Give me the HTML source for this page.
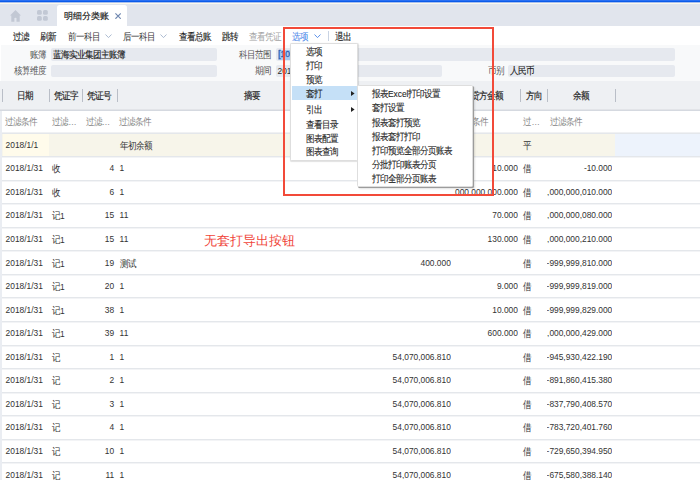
<!DOCTYPE html><html><head><meta charset="utf-8"><style>
*{margin:0;padding:0;box-sizing:border-box}
html,body{width:700px;height:480px;overflow:hidden;background:#fff}
body{position:relative;font-family:"Liberation Sans",sans-serif;font-size:8.4px;color:#333;line-height:1}
.a{position:absolute;white-space:nowrap}
.topbar{left:0;top:0;width:700px;height:3px;background:linear-gradient(#2a6ff2 0,#2a6ff2 1px,#0b5ce9 1px,#0b5ce9 2px,#a9bfef 2px)}
.topline{left:0;top:3px;width:700px;height:1px;background:#fbf9ec}
.tabbar{left:0;top:4px;width:700px;height:22px;background:#e1e5ed}
.tab{left:56.8px;top:5.4px;width:70.4px;height:21px;background:#fff;border-radius:2.5px 2.5px 0 0}
.tabt{left:64px;top:11.8px;font-size:8.9px;color:#222;-webkit-text-stroke:0.2px #222}
.toolbar{left:0;top:26px;width:700px;height:18.8px;background:#fff}
.tb{top:32.6px;font-size:8.4px;color:#1f1f1f;-webkit-text-stroke:0.12px currentColor}
.form{left:1px;top:44.8px;width:699px;height:36px;background:#f8f9fa}
.lbl{font-size:8.4px;color:#555}
.val{color:#1a1a1a;-webkit-text-stroke:0.12px currentColor}
.inp{background:#e6e9ef;height:12.4px;border-radius:2px}
.hdr{left:0;top:80.7px;width:700px;height:30.3px;background:#eef0f3;border-bottom:1px solid #d5d9e0}
.hs{width:1px;height:12.8px;top:89.4px;background:#b9bec7}
.ht{top:91.5px;font-size:8.4px;color:#222;-webkit-text-stroke:0.15px currentColor}
.filter{left:0;top:111px;width:700px;height:22.6px;background:#fff;border-bottom:1px solid #e4e7eb}
.ft{top:117.8px;color:#888}
.row{left:0;width:700px;border-bottom:1px solid #e4e7eb;box-shadow:0 1px 0 #f3f4f6}
.rt{color:#333}
.lstrip{left:0;top:111px;width:2px;height:370px;background:#eaedf2}
.menu{background:#fff;border:1px solid #dedede;border-radius:1.5px;box-shadow:0.5px 0.5px 1px rgba(0,0,0,.12)}
.sub{box-shadow:1px 1px 0 #9c9c9c,2px 2px 2px rgba(0,0,0,.12)}
.mi{font-size:8.4px;color:#1f1f1f;-webkit-text-stroke:0.1px currentColor}
.red{border:2px solid #f24a39}
.cj{transform:translateY(-0.4px) scaleY(1.17)}
.nm{transform:translateY(-1.3px) scaleY(1.12)}
.ann{left:203.8px;top:234.6px;font-size:12.5px;color:#f0453a}
</style></head><body>
<div class="a topbar" style=""></div>
<div class="a topline" style=""></div>
<div class="a tabbar" style=""></div>
<svg class="a" style="left:10px;top:9.8px" width="11" height="11.8" viewBox="0 0 11 11.8"><path d="M5.5 0 L0 5.4 L1.3 5.4 L1.3 11.8 L4.4 11.8 L4.4 8 Q5.45 7.3 6.5 8 L6.5 11.8 L9.7 11.8 L9.7 5.4 L11 5.4 Z" fill="#c2c8d4"/></svg>
<svg class="a" style="left:37px;top:10px" width="11" height="11" viewBox="0 0 11 11"><rect x="0" y="0" width="4.8" height="4.8" rx="1.6" fill="#c2c8d4"/><rect x="6" y="0" width="4.8" height="4.8" rx="1.6" fill="#c2c8d4"/><rect x="0" y="6" width="4.8" height="4.8" rx="1.6" fill="#c2c8d4"/><rect x="6" y="6" width="4.8" height="4.8" rx="1.6" fill="#c2c8d4"/></svg>
<div class="a tab" style=""></div>
<div class="a tabt" style="">明细分类账</div>
<svg class="a" style="left:114.6px;top:12.9px" width="6.2" height="6.2" viewBox="0 0 6 6"><path d="M0.4 0.4 L5.6 5.6 M5.6 0.4 L0.4 5.6" stroke="#7088b0" stroke-width="1.1"/></svg>
<div class="a toolbar" style=""></div>
<div class="a tb cj" style="left:13.2px">过滤</div>
<div class="a tb cj" style="left:40.3px">刷新</div>
<div class="a tb cj" style="left:68px;-webkit-text-stroke:0;color:#333">前一科目</div>
<svg class="a" style="left:104.5px;top:34px" width="7" height="4.5" viewBox="0 0 7 4.5"><path d="M0.5 0.5 L3.5 3.6 L6.5 0.5" fill="none" stroke="#a3b3cc" stroke-width="0.9"/></svg>
<div class="a tb cj" style="left:123px;-webkit-text-stroke:0;color:#333">后一科目</div>
<svg class="a" style="left:159.5px;top:34px" width="7" height="4.5" viewBox="0 0 7 4.5"><path d="M0.5 0.5 L3.5 3.6 L6.5 0.5" fill="none" stroke="#a3b3cc" stroke-width="0.9"/></svg>
<div class="a tb cj" style="left:179px">查看总账</div>
<div class="a tb cj" style="left:222px">跳转</div>
<div class="a tb cj" style="left:248.5px;color:#a3a3a3;-webkit-text-stroke:0">查看凭证</div>
<div class="a tb cj" style="left:292.3px;color:#3f7fe8;-webkit-text-stroke:0">选项</div>
<svg class="a" style="left:313.5px;top:34px" width="7" height="4.5" viewBox="0 0 7 4.5"><path d="M0.5 0.5 L3.5 3.6 L6.5 0.5" fill="none" stroke="#4a86e8" stroke-width="0.9"/></svg>
<div class="a a" style="left:327.5px;top:31px;width:1px;height:10px;background:#c9d3e3"></div>
<div class="a tb cj" style="left:335.3px">退出</div>
<div class="a form" style=""></div>
<div class="a lbl cj" style="left:29.7px;top:50.5px">账簿</div>
<div class="a inp" style="left:50.9px;top:48.4px;width:165.8px"></div>
<div class="a val cj" style="left:53px;top:50.5px">蓝海实业集团主账簿</div>
<div class="a lbl cj" style="left:14.3px;top:66.8px">核算维度</div>
<div class="a inp" style="left:50.9px;top:65px;width:165.8px"></div>
<div class="a lbl cj" style="left:238.9px;top:50.5px">科目范围</div>
<div class="a inp" style="left:276px;top:48.4px;width:398.8px"></div>
<div class="a " style="left:277.8px;top:49.5px;height:10.2px;width:13px;background:#a9c9f0"></div>
<div class="a  nm" style="left:278.2px;top:50.5px;color:#2d5cb0;-webkit-text-stroke:0.25px currentColor">[100</div>
<div class="a lbl cj" style="left:255.4px;top:66.8px">期间</div>
<div class="a inp" style="left:276px;top:65px;width:166px"></div>
<div class="a val nm" style="left:277.5px;top:67.8px;-webkit-text-stroke:0;color:#2a2a2a">2018</div>
<div class="a lbl cj" style="left:487.8px;top:66.8px">币别</div>
<div class="a inp" style="left:507.5px;top:65px;width:167.3px"></div>
<div class="a val cj" style="left:510px;top:66.8px">人民币</div>
<div class="a hdr" style=""></div>
<div class="a " style="left:0;top:109px;width:700px;height:1px;background:#e2e4e8"></div>
<div class="a hs" style="left:2.0px"></div>
<div class="a hs" style="left:48.9px"></div>
<div class="a hs" style="left:82.4px"></div>
<div class="a hs" style="left:116.6px"></div>
<div class="a hs" style="left:385.5px"></div>
<div class="a hs" style="left:452.5px"></div>
<div class="a hs" style="left:519.5px"></div>
<div class="a hs" style="left:546.9px"></div>
<div class="a hs" style="left:614.5px"></div>
<div class="a ht cj" style="left:0.8999999999999999px;width:48.5px;text-align:center;top:91.5px">日期</div>
<div class="a ht cj" style="left:48.8px;width:33.500000000000014px;text-align:center;top:91.5px">凭证字</div>
<div class="a ht cj" style="left:81.7px;width:34.19999999999999px;text-align:center;top:91.5px">凭证号</div>
<div class="a ht cj" style="left:117.1px;width:268.9px;text-align:center;top:91.5px">摘要</div>
<div class="a ht cj" style="left:386px;width:67px;text-align:center;top:91.5px">借方金额</div>
<div class="a ht cj" style="left:453px;width:67px;text-align:center;top:91.5px">贷方金额</div>
<div class="a ht cj" style="left:520px;width:27.399999999999977px;text-align:center;top:91.5px">方向</div>
<div class="a ht cj" style="left:547.4px;width:67.60000000000002px;text-align:center;top:91.5px">余额</div>
<div class="a filter" style=""></div>
<div class="a " style="left:0;top:132px;width:700px;height:1px;background:#f0f1f3"></div>
<div class="a ft cj" style="left:5px">过滤条件</div>
<div class="a ft cj" style="left:52.3px">过滤…</div>
<div class="a ft cj" style="left:85.7px">过滤…</div>
<div class="a ft cj" style="left:119.4px">过滤条件</div>
<div class="a ft cj" style="left:389px">过滤条件</div>
<div class="a ft cj" style="left:456px">过滤条件</div>
<div class="a ft cj" style="left:523.4px">过…</div>
<div class="a ft cj" style="left:549.8px">过滤条件</div>
<div class="a row" style="top:133.54px;height:23.56px;background:#f7f5ea"></div>
<div class="a " style="left:2.5px;top:133.54px;width:46.9px;height:22.56px;background:#fffbeb"></div>
<div class="a " style="left:615px;top:133.54px;width:85px;height:22.56px;background:#edf3fc"></div>
<div class="a rt nm" style="left:5.6px;top:141.73999999999998px">2018/1/1</div>
<div class="a rt cj" style="left:119.6px;top:141.73999999999998px">年初余额</div>
<div class="a rt cj" style="left:523px;top:141.73999999999998px">平</div>
<div class="a row" style="top:157.1px;height:23.56px"></div>
<div class="a rt nm" style="left:5.6px;top:165.29999999999998px">2018/1/31</div>
<div class="a rt cj" style="left:52px;top:165.29999999999998px">收</div>
<div class="a rt nm" style="left:82.9px;width:31.19999999999999px;text-align:right;top:165.29999999999998px">4</div>
<div class="a rt nm" style="left:119.6px;top:165.29999999999998px">1</div>
<div class="a rt nm" style="left:453.8px;width:64.1px;text-align:right;top:165.29999999999998px;overflow:hidden;display:flex;justify-content:flex-end">10.000</div>
<div class="a rt cj" style="left:523px;top:165.29999999999998px">借</div>
<div class="a rt nm" style="left:547.4px;width:64.90000000000002px;text-align:right;top:165.29999999999998px;overflow:hidden;display:flex;justify-content:flex-end">-10.000</div>
<div class="a row" style="top:180.66px;height:23.56px"></div>
<div class="a rt nm" style="left:5.6px;top:188.85999999999999px">2018/1/31</div>
<div class="a rt cj" style="left:52px;top:188.85999999999999px">收</div>
<div class="a rt nm" style="left:82.9px;width:31.19999999999999px;text-align:right;top:188.85999999999999px">6</div>
<div class="a rt nm" style="left:119.6px;top:188.85999999999999px">1</div>
<div class="a rt nm" style="left:453.8px;width:64.1px;text-align:right;top:188.85999999999999px;overflow:hidden;display:flex;justify-content:flex-end">-1,000,000,000.000</div>
<div class="a rt cj" style="left:523px;top:188.85999999999999px">借</div>
<div class="a rt nm" style="left:547.4px;width:64.90000000000002px;text-align:right;top:188.85999999999999px;overflow:hidden;display:flex;justify-content:flex-end">-1,000,000,010.000</div>
<div class="a row" style="top:204.21999999999997px;height:23.56px"></div>
<div class="a rt nm" style="left:5.6px;top:212.41999999999996px">2018/1/31</div>
<div class="a rt cj" style="left:52px;top:212.41999999999996px">记1</div>
<div class="a rt nm" style="left:82.9px;width:31.19999999999999px;text-align:right;top:212.41999999999996px">15</div>
<div class="a rt nm" style="left:119.6px;top:212.41999999999996px">11</div>
<div class="a rt nm" style="left:453.8px;width:64.1px;text-align:right;top:212.41999999999996px;overflow:hidden;display:flex;justify-content:flex-end">70.000</div>
<div class="a rt cj" style="left:523px;top:212.41999999999996px">借</div>
<div class="a rt nm" style="left:547.4px;width:64.90000000000002px;text-align:right;top:212.41999999999996px;overflow:hidden;display:flex;justify-content:flex-end">-1,000,000,080.000</div>
<div class="a row" style="top:227.77999999999997px;height:23.56px"></div>
<div class="a rt nm" style="left:5.6px;top:235.97999999999996px">2018/1/31</div>
<div class="a rt cj" style="left:52px;top:235.97999999999996px">记1</div>
<div class="a rt nm" style="left:82.9px;width:31.19999999999999px;text-align:right;top:235.97999999999996px">15</div>
<div class="a rt nm" style="left:119.6px;top:235.97999999999996px">11</div>
<div class="a rt nm" style="left:453.8px;width:64.1px;text-align:right;top:235.97999999999996px;overflow:hidden;display:flex;justify-content:flex-end">130.000</div>
<div class="a rt cj" style="left:523px;top:235.97999999999996px">借</div>
<div class="a rt nm" style="left:547.4px;width:64.90000000000002px;text-align:right;top:235.97999999999996px;overflow:hidden;display:flex;justify-content:flex-end">-1,000,000,210.000</div>
<div class="a row" style="top:251.33999999999997px;height:23.56px"></div>
<div class="a rt nm" style="left:5.6px;top:259.53999999999996px">2018/1/31</div>
<div class="a rt cj" style="left:52px;top:259.53999999999996px">记1</div>
<div class="a rt nm" style="left:82.9px;width:31.19999999999999px;text-align:right;top:259.53999999999996px">19</div>
<div class="a rt cj" style="left:119.6px;top:259.53999999999996px">测试</div>
<div class="a rt nm" style="left:386px;width:64.8px;text-align:right;top:259.53999999999996px;overflow:hidden;display:flex;justify-content:flex-end">400.000</div>
<div class="a rt cj" style="left:523px;top:259.53999999999996px">借</div>
<div class="a rt nm" style="left:547.4px;width:64.90000000000002px;text-align:right;top:259.53999999999996px;overflow:hidden;display:flex;justify-content:flex-end">-999,999,810.000</div>
<div class="a row" style="top:274.9px;height:23.56px"></div>
<div class="a rt nm" style="left:5.6px;top:283.09999999999997px">2018/1/31</div>
<div class="a rt cj" style="left:52px;top:283.09999999999997px">记1</div>
<div class="a rt nm" style="left:82.9px;width:31.19999999999999px;text-align:right;top:283.09999999999997px">20</div>
<div class="a rt nm" style="left:119.6px;top:283.09999999999997px">1</div>
<div class="a rt nm" style="left:453.8px;width:64.1px;text-align:right;top:283.09999999999997px;overflow:hidden;display:flex;justify-content:flex-end">9.000</div>
<div class="a rt cj" style="left:523px;top:283.09999999999997px">借</div>
<div class="a rt nm" style="left:547.4px;width:64.90000000000002px;text-align:right;top:283.09999999999997px;overflow:hidden;display:flex;justify-content:flex-end">-999,999,819.000</div>
<div class="a row" style="top:298.46px;height:23.56px"></div>
<div class="a rt nm" style="left:5.6px;top:306.65999999999997px">2018/1/31</div>
<div class="a rt cj" style="left:52px;top:306.65999999999997px">记1</div>
<div class="a rt nm" style="left:82.9px;width:31.19999999999999px;text-align:right;top:306.65999999999997px">38</div>
<div class="a rt nm" style="left:119.6px;top:306.65999999999997px">1</div>
<div class="a rt nm" style="left:453.8px;width:64.1px;text-align:right;top:306.65999999999997px;overflow:hidden;display:flex;justify-content:flex-end">10.000</div>
<div class="a rt cj" style="left:523px;top:306.65999999999997px">借</div>
<div class="a rt nm" style="left:547.4px;width:64.90000000000002px;text-align:right;top:306.65999999999997px;overflow:hidden;display:flex;justify-content:flex-end">-999,999,829.000</div>
<div class="a row" style="top:322.02px;height:23.56px"></div>
<div class="a rt nm" style="left:5.6px;top:330.21999999999997px">2018/1/31</div>
<div class="a rt cj" style="left:52px;top:330.21999999999997px">记1</div>
<div class="a rt nm" style="left:82.9px;width:31.19999999999999px;text-align:right;top:330.21999999999997px">39</div>
<div class="a rt nm" style="left:119.6px;top:330.21999999999997px">11</div>
<div class="a rt nm" style="left:453.8px;width:64.1px;text-align:right;top:330.21999999999997px;overflow:hidden;display:flex;justify-content:flex-end">600.000</div>
<div class="a rt cj" style="left:523px;top:330.21999999999997px">借</div>
<div class="a rt nm" style="left:547.4px;width:64.90000000000002px;text-align:right;top:330.21999999999997px;overflow:hidden;display:flex;justify-content:flex-end">-1,000,000,429.000</div>
<div class="a row" style="top:345.58px;height:23.56px"></div>
<div class="a rt nm" style="left:5.6px;top:353.78px">2018/1/31</div>
<div class="a rt cj" style="left:52px;top:353.78px">记</div>
<div class="a rt nm" style="left:82.9px;width:31.19999999999999px;text-align:right;top:353.78px">1</div>
<div class="a rt nm" style="left:119.6px;top:353.78px">1</div>
<div class="a rt nm" style="left:386px;width:64.8px;text-align:right;top:353.78px;overflow:hidden;display:flex;justify-content:flex-end">54,070,006.810</div>
<div class="a rt cj" style="left:523px;top:353.78px">借</div>
<div class="a rt nm" style="left:547.4px;width:64.90000000000002px;text-align:right;top:353.78px;overflow:hidden;display:flex;justify-content:flex-end">-945,930,422.190</div>
<div class="a row" style="top:369.14px;height:23.56px"></div>
<div class="a rt nm" style="left:5.6px;top:377.34px">2018/1/31</div>
<div class="a rt cj" style="left:52px;top:377.34px">记</div>
<div class="a rt nm" style="left:82.9px;width:31.19999999999999px;text-align:right;top:377.34px">2</div>
<div class="a rt nm" style="left:119.6px;top:377.34px">1</div>
<div class="a rt nm" style="left:386px;width:64.8px;text-align:right;top:377.34px;overflow:hidden;display:flex;justify-content:flex-end">54,070,006.810</div>
<div class="a rt cj" style="left:523px;top:377.34px">借</div>
<div class="a rt nm" style="left:547.4px;width:64.90000000000002px;text-align:right;top:377.34px;overflow:hidden;display:flex;justify-content:flex-end">-891,860,415.380</div>
<div class="a row" style="top:392.69999999999993px;height:23.56px"></div>
<div class="a rt nm" style="left:5.6px;top:400.8999999999999px">2018/1/31</div>
<div class="a rt cj" style="left:52px;top:400.8999999999999px">记</div>
<div class="a rt nm" style="left:82.9px;width:31.19999999999999px;text-align:right;top:400.8999999999999px">3</div>
<div class="a rt nm" style="left:119.6px;top:400.8999999999999px">1</div>
<div class="a rt nm" style="left:386px;width:64.8px;text-align:right;top:400.8999999999999px;overflow:hidden;display:flex;justify-content:flex-end">54,070,006.810</div>
<div class="a rt cj" style="left:523px;top:400.8999999999999px">借</div>
<div class="a rt nm" style="left:547.4px;width:64.90000000000002px;text-align:right;top:400.8999999999999px;overflow:hidden;display:flex;justify-content:flex-end">-837,790,408.570</div>
<div class="a row" style="top:416.26px;height:23.56px"></div>
<div class="a rt nm" style="left:5.6px;top:424.46px">2018/1/31</div>
<div class="a rt cj" style="left:52px;top:424.46px">记</div>
<div class="a rt nm" style="left:82.9px;width:31.19999999999999px;text-align:right;top:424.46px">4</div>
<div class="a rt nm" style="left:119.6px;top:424.46px">1</div>
<div class="a rt nm" style="left:386px;width:64.8px;text-align:right;top:424.46px;overflow:hidden;display:flex;justify-content:flex-end">54,070,006.810</div>
<div class="a rt cj" style="left:523px;top:424.46px">借</div>
<div class="a rt nm" style="left:547.4px;width:64.90000000000002px;text-align:right;top:424.46px;overflow:hidden;display:flex;justify-content:flex-end">-783,720,401.760</div>
<div class="a row" style="top:439.81999999999994px;height:23.56px"></div>
<div class="a rt nm" style="left:5.6px;top:448.0199999999999px">2018/1/31</div>
<div class="a rt cj" style="left:52px;top:448.0199999999999px">记</div>
<div class="a rt nm" style="left:82.9px;width:31.19999999999999px;text-align:right;top:448.0199999999999px">10</div>
<div class="a rt nm" style="left:119.6px;top:448.0199999999999px">1</div>
<div class="a rt nm" style="left:386px;width:64.8px;text-align:right;top:448.0199999999999px;overflow:hidden;display:flex;justify-content:flex-end">54,070,006.810</div>
<div class="a rt cj" style="left:523px;top:448.0199999999999px">借</div>
<div class="a rt nm" style="left:547.4px;width:64.90000000000002px;text-align:right;top:448.0199999999999px;overflow:hidden;display:flex;justify-content:flex-end">-729,650,394.950</div>
<div class="a row" style="top:463.38px;height:23.56px"></div>
<div class="a rt nm" style="left:5.6px;top:471.58px">2018/1/31</div>
<div class="a rt cj" style="left:52px;top:471.58px">记</div>
<div class="a rt nm" style="left:82.9px;width:31.19999999999999px;text-align:right;top:471.58px">11</div>
<div class="a rt nm" style="left:119.6px;top:471.58px">1</div>
<div class="a rt nm" style="left:386px;width:64.8px;text-align:right;top:471.58px;overflow:hidden;display:flex;justify-content:flex-end">54,070,006.810</div>
<div class="a rt cj" style="left:523px;top:471.58px">借</div>
<div class="a rt nm" style="left:547.4px;width:64.90000000000002px;text-align:right;top:471.58px;overflow:hidden;display:flex;justify-content:flex-end">-675,580,388.140</div>
<div class="a lstrip" style=""></div>
<div class="a ann" style="">无套打导出按钮</div>
<div class="a red" style="left:283px;top:27.1px;width:211.2px;height:168.8px"></div>
<div class="a menu" style="left:290.4px;top:42.5px;width:67.6px;height:118.3px"></div>
<div class="a " style="left:291.6px;top:86.2px;width:65.4px;height:14.1px;background:#c5e0f7"></div>
<div class="a mi cj" style="left:306px;top:48.3px">选项</div>
<div class="a mi cj" style="left:306px;top:62.0px">打印</div>
<div class="a mi cj" style="left:306px;top:75.7px">预览</div>
<div class="a mi cj" style="left:306px;top:89.6px">套打</div>
<div class="a mi cj" style="left:306px;top:106.0px">引出</div>
<div class="a mi cj" style="left:306px;top:120.6px">查看目录</div>
<div class="a mi cj" style="left:306px;top:134.5px">图表配置</div>
<div class="a mi cj" style="left:306px;top:148.2px">图表查询</div>
<svg class="a" style="left:350.5px;top:91.0px" width="4" height="5" viewBox="0 0 4 5"><path d="M0 0 L3.6 2.5 L0 5Z" fill="#222"/></svg>
<svg class="a" style="left:350.5px;top:107.4px" width="4" height="5" viewBox="0 0 4 5"><path d="M0 0 L3.6 2.5 L0 5Z" fill="#222"/></svg>
<div class="a menu sub" style="left:357px;top:84.5px;width:116px;height:102.7px"></div>
<div class="a mi cj" style="left:372px;top:89.75px">报表Excel打印设置</div>
<div class="a mi cj" style="left:372px;top:104.25px">套打设置</div>
<div class="a mi cj" style="left:372px;top:118.5px">报表套打预览</div>
<div class="a mi cj" style="left:372px;top:132.5px">报表套打打印</div>
<div class="a mi cj" style="left:372px;top:146.75px">打印预览全部分页账表</div>
<div class="a mi cj" style="left:372px;top:161.0px">分批打印账表分页</div>
<div class="a mi cj" style="left:372px;top:174.75px">打印全部分页账表</div>
</body></html>
